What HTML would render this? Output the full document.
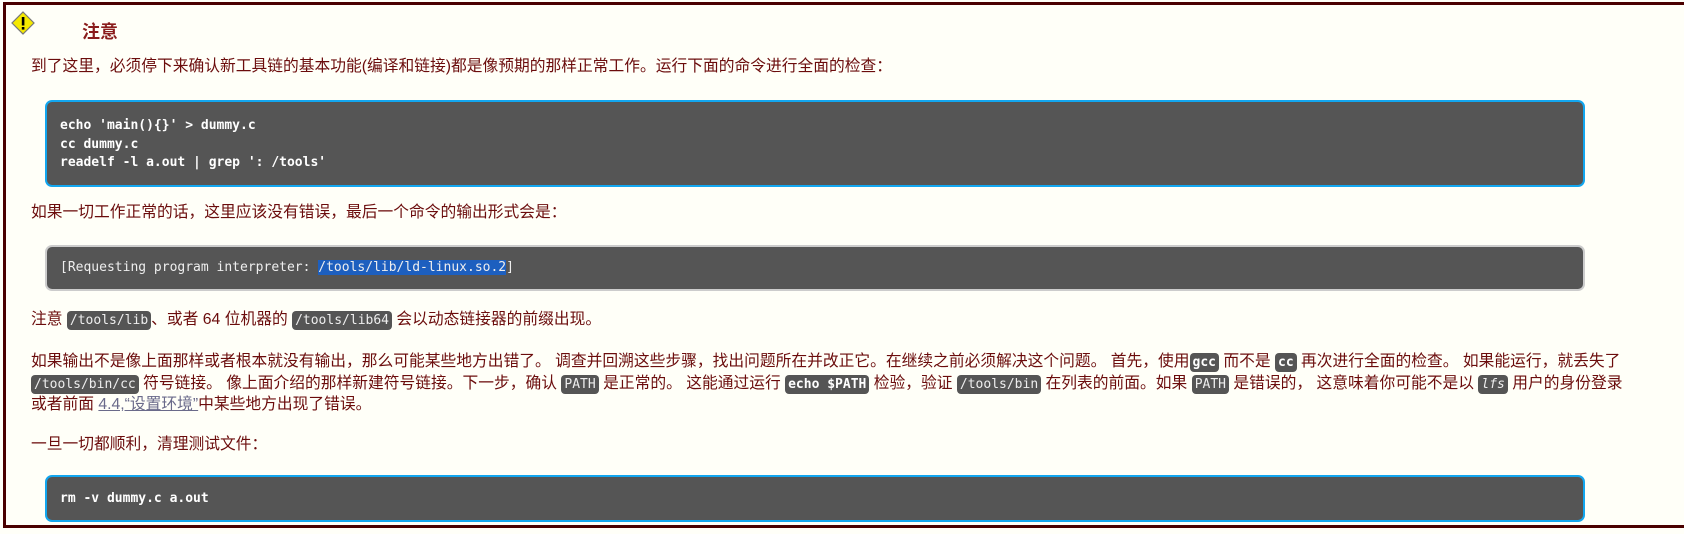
<!DOCTYPE html>
<html><head><meta charset="utf-8"><style>
html,body{margin:0;padding:0;background:#fffff8;width:1684px;height:534px;overflow:hidden}
body{font-family:"Liberation Sans","Noto Sans CJK SC",sans-serif;color:#6b0c0c;font-size:15.75px}
.frame{position:absolute;left:3px;top:2px;width:1690px;height:526px;border:3px solid #4a0000;border-right:none;box-sizing:border-box}
.t{position:absolute;left:31px;white-space:nowrap;line-height:20px}
.box{position:absolute;left:45px;width:1540px;background:#555;border:2px solid #12a6ef;border-radius:7px;box-sizing:border-box}
.box.g{border-color:#ccc}
.code{position:absolute;left:60px;font-family:"DejaVu Sans Mono","Liberation Mono",monospace;font-size:13px;color:#fff;font-weight:bold;white-space:pre;line-height:18.5px}
.code.n{font-weight:normal;color:#eee}
.c{font-family:"DejaVu Sans Mono",monospace;font-size:13px;background:#555;color:#eee;border-radius:4px;padding:2px 3px}
.c.b{font-weight:bold;color:#fff}
a{color:#6a6a8a;text-decoration:underline}
</style></head><body>
<div class="frame"></div>
<svg style="position:absolute;left:11px;top:11px" width="24" height="24" viewBox="0 0 24 24"><polygon points="12,1 23,12 12,23 1,12" fill="#f5e900" stroke="#777" stroke-width="1.2"/><rect x="10.8" y="6" width="2.6" height="8.5" fill="#000"/><rect x="10.8" y="16" width="2.6" height="2.6" fill="#000"/></svg>
<div class="t" style="left:82px;top:22px;font-size:18px;font-weight:bold;color:#8a1c1c">注意</div>
<div class="t" style="top:57px">到了这里，必须停下来确认新工具链的基本功能(编译和链接)都是像预期的那样正常工作。运行下面的命令进行全面的检查：</div>
<div class="box" style="top:100px;height:87px"></div>
<div class="code" style="top:117px">echo 'main(){}' &gt; dummy.c
cc dummy.c
readelf -l a.out | grep ': /tools'</div>
<div class="t" style="top:203px">如果一切工作正常的话，这里应该没有错误，最后一个命令的输出形式会是：</div>
<div class="box g" style="top:245px;height:46px"></div>
<div class="code n" style="top:259px">[Requesting program interpreter: <span style="background:#1d5fbf">/tools/lib/ld-linux.so.2</span>]</div>
<div class="t" style="top:310px">注意 <span class="c">/tools/lib</span>、或者 64 位机器的 <span class="c">/tools/lib64</span> 会以动态链接器的前缀出现。</div>
<div class="t" style="top:352px;line-height:20.5px">如果输出不是像上面那样或者根本就没有输出，那么可能某些地方出错了。 调查并回溯这些步骤，找出问题所在并改正它。在继续之前必须解决这个问题。 首先，使用<span class="c b">gcc</span> 而不是 <span class="c b">cc</span> 再次进行全面的检查。 如果能运行，就丢失了<br><span class="c">/tools/bin/cc</span> 符号链接。 像上面介绍的那样新建符号链接。下一步，确认 <span class="c">PATH</span> 是正常的。 这能通过运行 <span class="c b">echo $PATH</span> 检验，验证 <span class="c">/tools/bin</span> 在列表的前面。如果 <span class="c">PATH</span> 是错误的， 这意味着你可能不是以 <span class="c"><i>lfs</i></span> 用户的身份登录<br>或者前面 <a>4.4,“设置环境”</a>中某些地方出现了错误。</div>
<div class="t" style="top:435px">一旦一切都顺利，清理测试文件：</div>
<div class="box" style="top:475px;height:47px"></div>
<div class="code" style="top:490px">rm -v dummy.c a.out</div>
</body></html>
